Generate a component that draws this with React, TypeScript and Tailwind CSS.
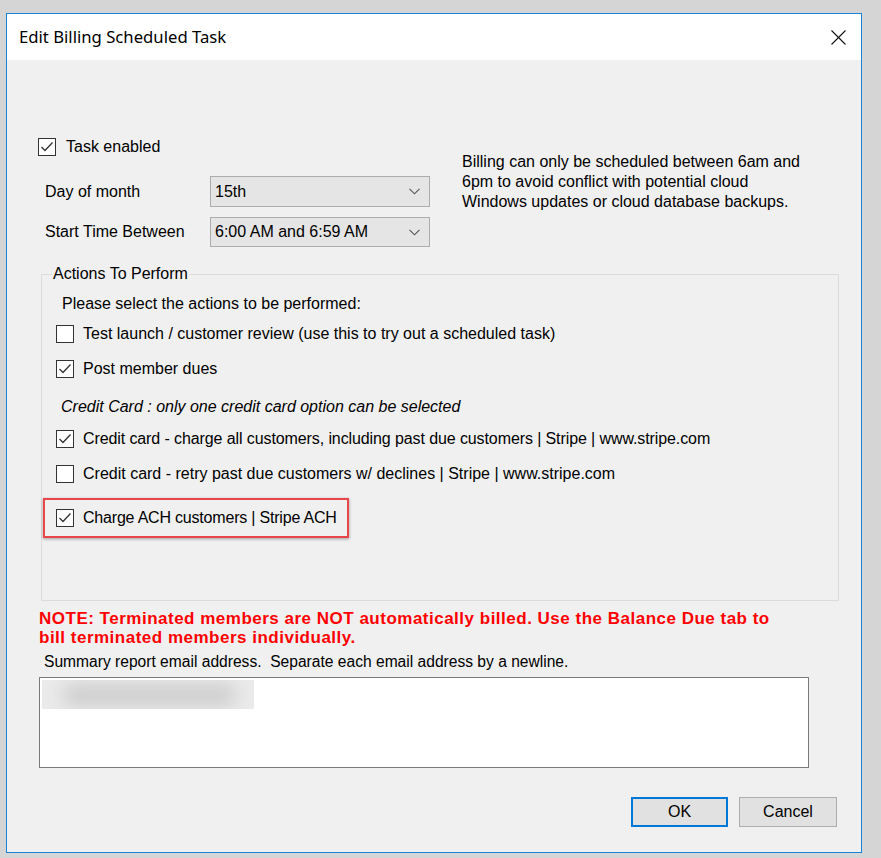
import React from "react";

function Check({ checked }: { checked: boolean }) {
  return (
    <div className="w-[18px] h-[18px] shrink-0 border border-[#333333] bg-white flex items-center justify-center">
      {checked && (
        <svg width="14" height="14" viewBox="0 0 14 14">
          <polyline points="1.5,7 5,10.5 12.5,2.5" fill="none" stroke="#333333" strokeWidth="1.3" />
        </svg>
      )}
    </div>
  );
}

function Select({ value }: { value: string }) {
  return (
    <div className="w-[220px] h-full border border-[#acacac] bg-[#e5e5e5] flex items-center justify-between pl-[4px] pr-[9px]">
      <span>{value}</span>
      <svg width="11" height="7" viewBox="0 0 11 7">
        <polyline points="0.5,0.8 5.5,5.8 10.5,0.8" fill="none" stroke="#555555" strokeWidth="1.1" />
      </svg>
    </div>
  );
}

function Row({ checked, children, className = "" }: { checked: boolean; children: React.ReactNode; className?: string }) {
  return (
    <div className={"flex items-center gap-[9px] h-[18px] ml-[14px] whitespace-nowrap " + className}>
      <Check checked={checked} />
      <span>{children}</span>
    </div>
  );
}

export default function App() {
  return (
    <div className="w-[881px] h-[858px] bg-[#d5d5d5] pt-[13px] pl-[6px] overflow-hidden">
      <div
        className="w-[856px] h-[840px] border border-[#1883d7] bg-[#f0f0f0] flex flex-col text-[16px] text-black"
        style={{ fontFamily: '"Liberation Sans", Arial, sans-serif' }}
      >
        <div className="h-[46px] bg-white flex items-center justify-between pl-[12px] pr-[15px] shrink-0">
          <span className="text-[16.7px] text-black" style={{ fontFamily: '"Noto Sans", "Open Sans", sans-serif' }}>
            Edit Billing Scheduled Task
          </span>
          <svg width="15" height="15" viewBox="0 0 15 15">
            <line x1="0.5" y1="0.5" x2="14.5" y2="14.5" stroke="#111111" strokeWidth="1.1" />
            <line x1="14.5" y1="0.5" x2="0.5" y2="14.5" stroke="#111111" strokeWidth="1.1" />
          </svg>
        </div>

        <div className="flex-1 flex flex-col">
          <div className="flex mt-[78px]">
            <div className="ml-[31px] w-[392px] flex flex-col">
              <div className="flex items-center gap-[10px] h-[18px]">
                <Check checked={true} />
                <span>Task enabled</span>
              </div>
              <div className="flex items-center h-[31px] mt-[20px]">
                <span className="ml-[7px] w-[165px]">Day of month</span>
                <Select value="15th" />
              </div>
              <div className="flex items-center h-[30px] mt-[10px]">
                <span className="ml-[7px] w-[165px]">Start Time Between</span>
                <Select value="6:00 AM and 6:59 AM" />
              </div>
            </div>
            <div className="ml-[32px] mt-[14px] leading-[20px] whitespace-nowrap">
              Billing can only be scheduled between 6am and
              <br />
              6pm to avoid conflict with potential cloud
              <br />
              Windows updates or cloud database backups.
            </div>
          </div>

          <fieldset className="ml-[34px] mt-[18px] w-[798px] h-[336px] border border-[#dcdcdc] flex flex-col">
            <legend className="ml-[10px] px-[1px] leading-[18px]">Actions To Perform</legend>
            <div className="ml-[20px] mt-[12px] h-[18px] leading-[18px]">Please select the actions to be performed:</div>
            <Row checked={false} className="mt-[12px]">
              Test launch / customer review (use this to try out a scheduled task)
            </Row>
            <Row checked={true} className="mt-[17px]">
              Post member dues
            </Row>
            <div className="ml-[19px] mt-[20px] h-[18px] leading-[18px] italic">
              Credit Card : only one credit card option can be selected
            </div>
            <Row checked={true} className="mt-[14px]">
              <span className="tracking-[-0.1px]">
                Credit card - charge all customers, including past due customers | Stripe | www.stripe.com
              </span>
            </Row>
            <Row checked={false} className="mt-[17px]">
              Credit card - retry past due customers w/ declines | Stripe | www.stripe.com
            </Row>
            <div className="ml-[1px] mt-[15px] w-[306px] h-[40px] border-2 border-[#e8464a] shadow-[0_1px_3px_rgba(0,0,0,0.35)] flex items-center gap-[9px] pl-[11px] whitespace-nowrap">
              <Check checked={true} />
              <span className="tracking-[-0.2px]">Charge ACH customers | Stripe ACH</span>
            </div>
          </fieldset>

          <div className="ml-[32px] mt-[8px] text-[17px] tracking-[0.5px] leading-[19px] font-bold text-[#ff0000] whitespace-nowrap">
            NOTE: Terminated members are NOT automatically billed. Use the Balance Due tab to
            <br />
            bill terminated members individually.
          </div>

          <div className="ml-[37px] mt-[6px] h-[18px] leading-[18px] text-[15.6px] whitespace-pre">
            Summary report email address.  Separate each email address by a newline.
          </div>

          <div className="ml-[32px] mt-[6px] w-[770px] h-[91px] border border-[#7a7a7a] bg-white p-[2px]">
            <div className="w-[212px] h-[29px] bg-[#ebebeb] overflow-hidden flex items-center">
              <div className="ml-[20px] w-[175px] h-[22px] rounded-full bg-[#cdcdcd] blur-[9px]" />
            </div>
          </div>

          <div className="flex justify-end gap-[11px] mt-[29px] pr-[24px]">
            <div className="w-[97px] h-[30px] border-2 border-[#0078d7] bg-[#e1e1e1] flex items-center justify-center">
              OK
            </div>
            <div className="w-[98px] h-[30px] border border-[#adadad] bg-[#e1e1e1] flex items-center justify-center">
              Cancel
            </div>
          </div>
        </div>
      </div>
    </div>
  );
}
